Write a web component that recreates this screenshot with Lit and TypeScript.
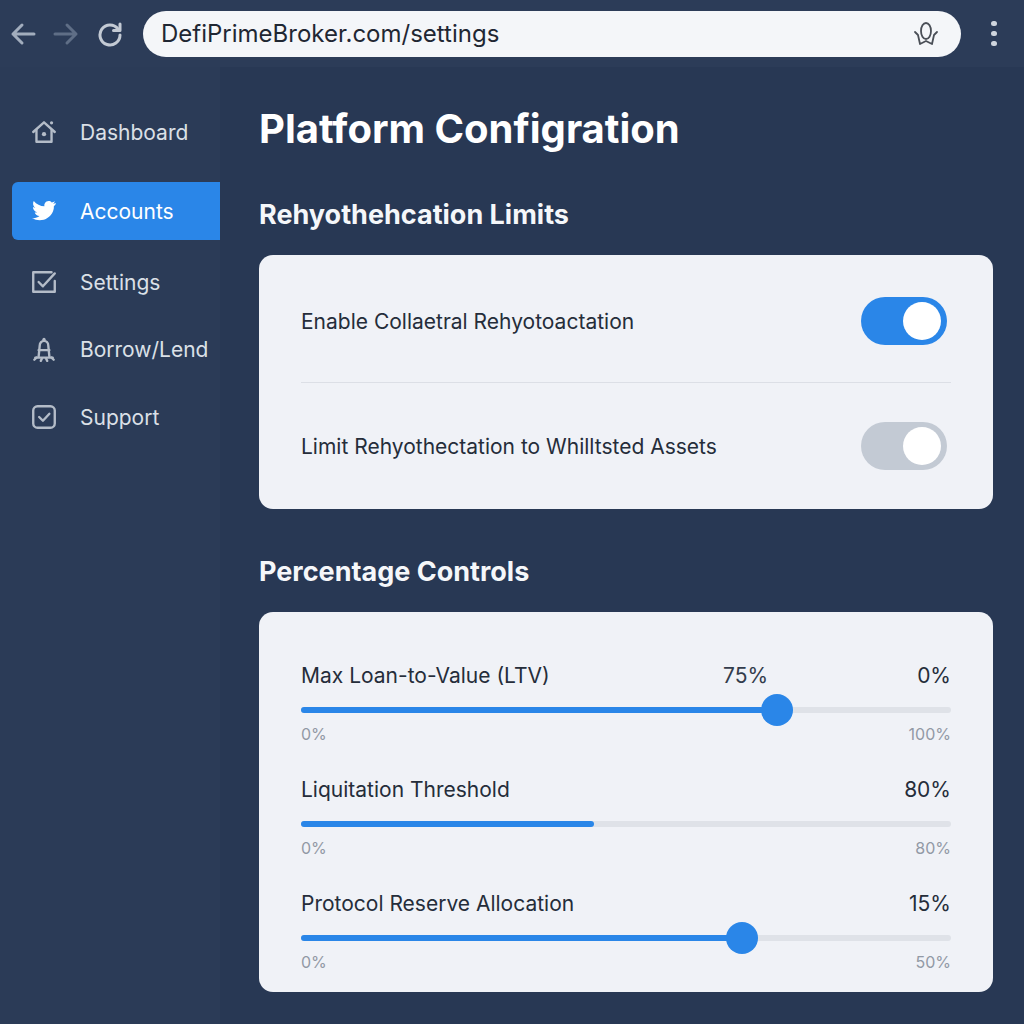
import { LitElement, html, css, svg } from "lit";
import { customElement } from "lit/decorators.js";

const icons: Record<string, unknown> = {
  home: svg`<path d="M3 13 L13 4 L23 13" /><path d="M6 11 V22 H20 V11" /><circle cx="13" cy="15" r="2" fill="currentColor" stroke="none"/><circle cx="20" cy="4.5" r="1.5" fill="currentColor" stroke="none"/>`,
  bird: svg`<path stroke="none" fill="currentColor" d="M24 5.5c-.9.5-1.7.7-2.6.8.9-.6 1.5-1.4 1.6-2.3-.9.5-1.8.9-2.8 1.1-1.8-2-5-1.6-6.4.6-.6 1-.7 2-.4 3C9.600 8.500 5.900 6.500 3.500 3.600c-1.300 2.200-.6 5 1.400 6.400-.8 0-1.500-.2-2.200-.6 0 2.300 1.600 4.300 3.800 4.800-.7.2-1.400.2-2.100.1.6 2 2.400 3.300 4.400 3.400-1.900 1.500-4.300 2.200-6.800 1.900 7 4.500 16.500 1.300 19.400-6.300.6-1.600.9-3.300.8-5 1-.7 1.800-1.600 1.800-2.800z"/>`,
  settings: svg`<path d="M20 4 H3 V22 H23 V12" /><path d="M8 13 L12 17 L23 5" />`,
  bell: svg`<path d="M8 20 L9 10 C9 4 17 4 17 10 L18 20" /><path d="M5 21 H21" /><path d="M8 14 H18" /><circle cx="13" cy="4" r="1.500" fill="currentColor" stroke="none"/><path d="M11 22 L10 24 M15 22 L16 24 M6 21 L4 23 M20 21 L22 23"/>`,
  support: svg`<rect x="3" y="3" width="20" height="20" rx="4" /><path d="M8.500 13 L12 16.500 L18 10" />`,
};

const nav = [
  { label: "Dashboard", icon: "home", h: 60, mb: 20 },
  { label: "Accounts", icon: "bird", h: 58, mb: 8, active: true },
  { label: "Settings", icon: "settings", h: 68, mb: 0 },
  { label: "Borrow/Lend", icon: "bell", h: 66, mb: 1 },
  { label: "Support", icon: "support", h: 68, mb: 0 },
];

const sliders = [
  { label: "Max Loan-to-Value (LTV)", mid: "75%", val: "0%", pct: 73.2, thumb: true, max: "100%" },
  { label: "Liquitation Threshold", val: "80%", pct: 45, thumb: false, max: "80%" },
  { label: "Protocol Reserve Allocation", val: "15%", pct: 67.8, thumb: true, max: "50%" },
];

@customElement("app-root")
export class AppRoot extends LitElement {
  static styles = css`
    :host { display: block; width: 1024px; height: 1024px; overflow: hidden; background: #2a3a55; font-family: Inter, Roboto, "Liberation Sans", sans-serif; }
    .top { height: 67px; box-sizing: border-box; display: flex; align-items: center; background: #2c3c58; padding: 0 0 0 10px; }
    .nav-btn { display: block; flex: none; }
    .back { color: #a2adbd; }
    .fwd { color: #5f6e86; margin-left: 17px; }
    .reload { color: #c3cad4; margin-left: 18px; }
    .url { flex: none; width: 818px; height: 46px; margin: 0 0 0 20px; box-sizing: border-box; background: #f4f6f9; border-radius: 23px; display: flex; align-items: center; justify-content: space-between; padding: 0 22px 0 18px; font-size: 24px; color: #1f2733; }
    .url svg { color: #4a4f57; }
    .dots { margin-left: 30px; display: flex; flex-direction: column; gap: 4.500px; }
    .dots i { display: block; width: 5.500px; height: 5.500px; border-radius: 50%; background: #cfd5de; }
    .body { display: flex; height: 957px; }
    .side { width: 220px; flex: none; box-sizing: border-box; background: #2b3b57; padding: 35px 0 0 12px; }
    .item { display: flex; align-items: center; color: #dbe0e7; font-size: 21px; padding-left: 18px; gap: 22px; box-sizing: border-box; }
    .item svg { color: #b4bcc8; flex: none; }
    .item.active { background: #2a86e8; border-radius: 6px 0 0 6px; color: #fff; }
    .item.active svg { color: #fff; }
    .main { flex: 1; box-sizing: border-box; background: #283854; padding: 36px 31px 0 39px; }
    h1 { margin: 0; font-size: 40px; line-height: 52px; font-weight: 700; color: #fff; }
    h2 { margin: 0; font-size: 27px; line-height: 36px; font-weight: 700; color: #f5f7fa; }
    .h2a { margin-top: 42px; }
    .h2b { margin-top: 45px; }
    .card { background: #f0f2f7; border-radius: 14px; padding: 0 42px; box-sizing: border-box; margin-top: 22px; color: #252d3a; font-size: 21px; }
    .c1 { height: 254px; display: flex; flex-direction: column; }
    .row { display: flex; align-items: center; justify-content: space-between; padding-right: 4px; }
    .r1 { height: 127px; padding-top: 5px; box-sizing: border-box; border-bottom: 0; }
    .r2 { height: 126px; box-sizing: border-box; }
    hr { flex: none; margin: 0; border: 0; height: 1px; background: #dcdfe6; }
    .tg { width: 86px; height: 48px; border-radius: 24px; background: #2a86e8; display: flex; align-items: center; justify-content: flex-end; padding-right: 6px; box-sizing: border-box; }
    .tg.off { background: #c3cad4; }
    .tg i { width: 38px; height: 38px; border-radius: 50%; background: #fff; display: block; }
    .c2 { height: 380px; padding-top: 48px; }
    .sl { height: 114px; }
    .lab { display: flex; height: 30px; align-items: center; }
    .lab .name { flex: 1; }
    .lab .mid { position: relative; left: -149px; color: #333c4c; }
    .track { height: 6px; margin-top: 17px; border-radius: 3px; background: #dfe2e8; position: relative; }
    .fill { height: 100%; background: #2a86e8; border-radius: 3px; }
    .thumb { position: absolute; top: 50%; width: 32px; height: 32px; border-radius: 50%; background: #2a86e8; transform: translate(-50%, -50%); }
    .ends { display: flex; justify-content: space-between; color: #9299a5; font-size: 16px; margin-top: 11px; line-height: 20px; }
  `;

  render() {
    return html`
      <div class="top">
        <svg class="nav-btn back" width="26" height="26" viewBox="0 0 26 26" fill="none" stroke="currentColor" stroke-width="3" stroke-linecap="round" stroke-linejoin="round"><path d="M24 13 H3 M12 4 L3 13 L12 22"/></svg>
        <svg class="nav-btn fwd" width="26" height="26" viewBox="0 0 26 26" fill="none" stroke="currentColor" stroke-width="3" stroke-linecap="round" stroke-linejoin="round"><path d="M2 13 H23 M14 4 L23 13 L14 22"/></svg>
        <svg class="nav-btn reload" width="26" height="26" viewBox="0 0 26 26" fill="none" stroke="currentColor" stroke-width="3" stroke-linecap="round" stroke-linejoin="round"><path d="M21 8 A10 10 0 1 0 23 14"/><path d="M23 3 V9.500 H16.500"/></svg>
        <div class="url">DefiPrimeBroker.com/settings
          <svg width="26" height="26" viewBox="0 0 26 26" fill="none" stroke="currentColor" stroke-width="1.800" stroke-linejoin="round" stroke-linecap="round"><ellipse cx="13" cy="10" rx="5" ry="8"/><path d="M2 11 L5 14 L7 23 L13 20 L19 23 L21 14 L24 11"/></svg>
        </div>
        <div class="dots"><i></i><i></i><i></i></div>
      </div>
      <div class="body">
        <aside class="side">
          ${nav.map(
            (n) => html`<div class="item ${n.active ? "active" : ""}" style="height:${n.h}px;margin-bottom:${n.mb}px">
              <svg width="28" height="28" viewBox="0 0 26 26" fill="none" stroke="currentColor" stroke-width="2.200" stroke-linejoin="round" stroke-linecap="round">${icons[n.icon]}</svg>
              <span>${n.label}</span>
            </div>`
          )}
        </aside>
        <main class="main">
          <h1>Platform Configration</h1>
          <h2 class="h2a">Rehyothehcation Limits</h2>
          <section class="card c1">
            <div class="row r1"><span>Enable Collaetral Rehyotoactation</span><div class="tg"><i></i></div></div>
            <hr />
            <div class="row r2"><span>Limit Rehyothectation to Whilltsted Assets</span><div class="tg off"><i></i></div></div>
          </section>
          <h2 class="h2b">Percentage Controls</h2>
          <section class="card c2">
            ${sliders.map(
              (s) => html`<div class="sl">
                <div class="lab"><span class="name">${s.label}</span>${s.mid ? html`<span class="mid">${s.mid}</span>` : ""}<span>${s.val}</span></div>
                <div class="track"><div class="fill" style="width:${s.pct}%"></div>${s.thumb ? html`<div class="thumb" style="left:${s.pct}%"></div>` : ""}</div>
                <div class="ends"><span>0%</span><span>${s.max}</span></div>
              </div>`
            )}
          </section>
        </main>
      </div>
    `;
  }
}
